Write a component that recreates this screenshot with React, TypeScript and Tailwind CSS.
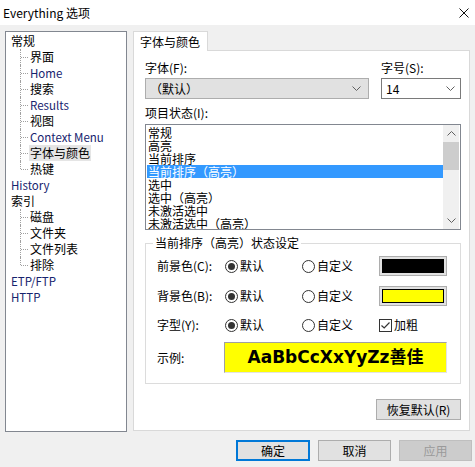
import React from "react"

const font = "font-['Noto_Sans_CJK_SC','Noto_Sans',sans-serif]"

type TreeNode = { label: string; en?: boolean; children?: { label: string; en?: boolean; selected?: boolean }[] }

const tree: TreeNode[] = [
  {
    label: "常规",
    children: [
      { label: "界面" },
      { label: "Home", en: true },
      { label: "搜索" },
      { label: "Results", en: true },
      { label: "视图" },
      { label: "Context Menu", en: true },
      { label: "字体与颜色", selected: true },
      { label: "热键" },
    ],
  },
  { label: "History", en: true },
  {
    label: "索引",
    children: [{ label: "磁盘" }, { label: "文件夹" }, { label: "文件列表" }, { label: "排除" }],
  },
  { label: "ETP/FTP", en: true },
  { label: "HTTP", en: true },
]

const states = ["常规", "高亮", "当前排序", "当前排序（高亮）", "选中", "选中（高亮）", "未激活选中", "未激活选中（高亮）"]

function Chevron({ up = false, className = "" }: { up?: boolean; className?: string }) {
  return (
    <svg width="9" height="5" viewBox="0 0 9 5" className={className}>
      <path d={up ? "M0.5 4.5 L4.5 0.5 L8.5 4.5" : "M0.5 0.5 L4.5 4.5 L8.5 0.5"} fill="none" stroke="#606060" strokeWidth="1" />
    </svg>
  )
}

function Radio({ checked, label }: { checked?: boolean; label: string }) {
  return (
    <div className="flex items-center gap-[2px] w-[77px]">
      <span className="w-[13px] h-[13px] rounded-full border border-[#333] bg-white flex items-center justify-center">
        {checked && <span className="w-[7px] h-[7px] rounded-full bg-[#333]" />}
      </span>
      <span>{label}</span>
    </div>
  )
}

function ColorButton({ color, framed }: { color: string; framed?: boolean }) {
  return (
    <div className="w-[68px] h-[20px] border border-[#adadad] bg-[#e1e1e1] p-[2px]">
      <div className={`w-full h-full ${framed ? "border border-black" : ""}`} style={{ background: color }} />
    </div>
  )
}

function Button({ children, primary, disabled, className = "" }: { children: React.ReactNode; primary?: boolean; disabled?: boolean; className?: string }) {
  return (
    <div
      className={`h-[21px] flex items-center justify-center ${
        primary
          ? "border-2 border-[#0078d7] bg-[#e1e1e1]"
          : disabled
          ? "border border-[#bfbfbf] bg-[#cccccc] text-[#9a9a9a]"
          : "border border-[#adadad] bg-[#e1e1e1]"
      } ${className}`}
    >
      {children}
    </div>
  )
}

export default function App() {
  return (
    <div className={`w-[475px] h-[467px] bg-[#f0f0f0] overflow-hidden text-[12px] text-black leading-[16px] ${font}`}>
      {/* title bar */}
      <div className="h-[25px] bg-white flex items-center justify-between pl-[3px] pr-[6px]">
        <span className="text-[12px]">Everything 选项</span>
        <svg width="10" height="10" viewBox="0 0 10 10">
          <path d="M0.5 0.5 L9.5 9.5 M9.5 0.5 L0.5 9.5" stroke="#111" strokeWidth="1" />
        </svg>
      </div>

      <div className="flex px-[5px] pt-[6px] gap-[6px]">
        {/* tree */}
        <div className="w-[122px] h-[401px] border border-[#828790] bg-white pt-[1px]">
          {tree.map((node) => (
            <div key={node.label}>
              <div className={`h-[16px] pl-[5px] ${node.en ? "text-[#16236e] text-[11.5px]" : ""}`}>{node.label}</div>
              {node.children?.map((c, i) => {
                const last = i === node.children!.length - 1
                return (
                  <div key={c.label} className="h-[16px] flex items-center">
                    <div className="relative w-[23px] h-full shrink-0">
                      <span className={`absolute left-[14px] top-0 w-0 border-l border-dotted border-[#a0a0a0] ${last ? "h-[8px]" : "h-full"}`} />
                      <span className="absolute left-[15px] top-[8px] w-[7px] h-0 border-t border-dotted border-[#a0a0a0]" />
                    </div>
                    <span className={`px-[1px] ${c.selected ? "bg-[#e5e5e5]" : ""} ${c.en ? "text-[#16236e] text-[11.5px]" : ""}`}>{c.label}</span>
                  </div>
                )
              })}
            </div>
          ))}
        </div>

        {/* tab area */}
        <div className="w-[337px] flex flex-col">
          <div className="flex">
            <div className="h-[20px] w-[75px] border-t border-l border-r border-[#d9d9d9] bg-white -mb-px relative z-10 pl-[6px] flex items-center">
              字体与颜色
            </div>
          </div>
          <div className="h-[381px] border border-[#d9d9d9] bg-white pl-[11px] pr-[8px] pt-[9px] flex flex-col">
            <div className="flex gap-[12px]">
              <div className="w-[224px]">
                <div className="h-[16px]">字体(F):</div>
                <div className="mt-[2px] h-[21px] border border-[#adadad] bg-[#e1e1e1] flex items-center justify-between pl-[4px] pr-[7px]">
                  <span>（默认）</span>
                  <Chevron />
                </div>
              </div>
              <div className="w-[80px]">
                <div className="h-[16px]">字号(S):</div>
                <div className="mt-[2px] h-[21px] border border-[#7a7a7a] bg-white flex items-center justify-between pl-[4px] pr-[5px]">
                  <span>14</span>
                  <Chevron />
                </div>
              </div>
            </div>

            <div className="mt-[6px] h-[16px]">项目状态(I):</div>
            <div className="mt-[3px] h-[106px] w-[316px] border border-[#828790] bg-white flex overflow-hidden">
              <div className="flex-1 pt-[1px] pl-[1px]">
                {states.map((s, i) => (
                  <div key={s} className={`h-[13px] leading-[13px] pl-[1px] ${i === 3 ? "bg-[#3399ff] text-white" : ""}`}>
                    {s}
                  </div>
                ))}
              </div>
              <div className="w-[16px] mr-[1px] bg-[#f0f0f0] flex flex-col">
                <div className="h-[17px] flex items-center justify-center">
                  <Chevron up />
                </div>
                <div className="h-[28px] bg-[#cdcdcd]" />
                <div className="flex-1" />
                <div className="h-[17px] flex items-center justify-center">
                  <Chevron />
                </div>
              </div>
            </div>

            {/* group */}
            <div className="mt-[13px] relative h-[141px] w-[316px] border border-[#dcdcdc] pl-[11px] pt-[12px]">
              <span className="absolute left-[7px] top-[-9px] bg-white px-[2px]">当前排序（高亮）状态设定</span>
              <div className="h-[20px] flex items-center">
                <span className="w-[68px]">前景色(C):</span>
                <Radio checked label="默认" />
                <Radio label="自定义" />
                <ColorButton color="#000000" />
              </div>
              <div className="mt-[10px] h-[20px] flex items-center">
                <span className="w-[68px]">背景色(B):</span>
                <Radio checked label="默认" />
                <Radio label="自定义" />
                <ColorButton color="#ffff00" framed />
              </div>
              <div className="mt-[9px] h-[20px] flex items-center">
                <span className="w-[68px]">字型(Y):</span>
                <Radio checked label="默认" />
                <Radio label="自定义" />
                <div className="flex items-center gap-[2px]">
                  <span className="w-[13px] h-[13px] border border-[#333] bg-white flex items-center justify-center">
                    <svg width="9" height="7" viewBox="0 0 9 7">
                      <path d="M0.5 3.5 L3.2 6 L8.5 0.5" fill="none" stroke="#333" strokeWidth="1.2" />
                    </svg>
                  </span>
                  <span>加粗</span>
                </div>
              </div>
              <div className="mt-[7px] h-[31px] flex items-center">
                <span className="w-[67px]">示例:</span>
                <div className="w-[223px] h-[31px] bg-[#ffff00] border-t border-l border-t-[#a0a0a0] border-l-[#a0a0a0] border-b border-r border-b-[#e3e3e3] border-r-[#e3e3e3] flex items-center justify-center font-bold text-[17px] leading-none font-['DejaVu_Sans','Noto_Sans_CJK_SC',sans-serif]">
                  AaBbCcXxYyZz善佳
                </div>
              </div>
            </div>

            <div className="mt-[15px] w-[316px] flex justify-end">
              <Button className="w-[85px]">恢复默认(R)</Button>
            </div>
          </div>
        </div>
      </div>

      <div className="mt-[8px] flex justify-end gap-[8px] pr-[3px]">
        <Button primary className="w-[74px]">确定</Button>
        <Button className="w-[73px]">取消</Button>
        <Button disabled className="w-[73px]">应用</Button>
      </div>
    </div>
  )
}
